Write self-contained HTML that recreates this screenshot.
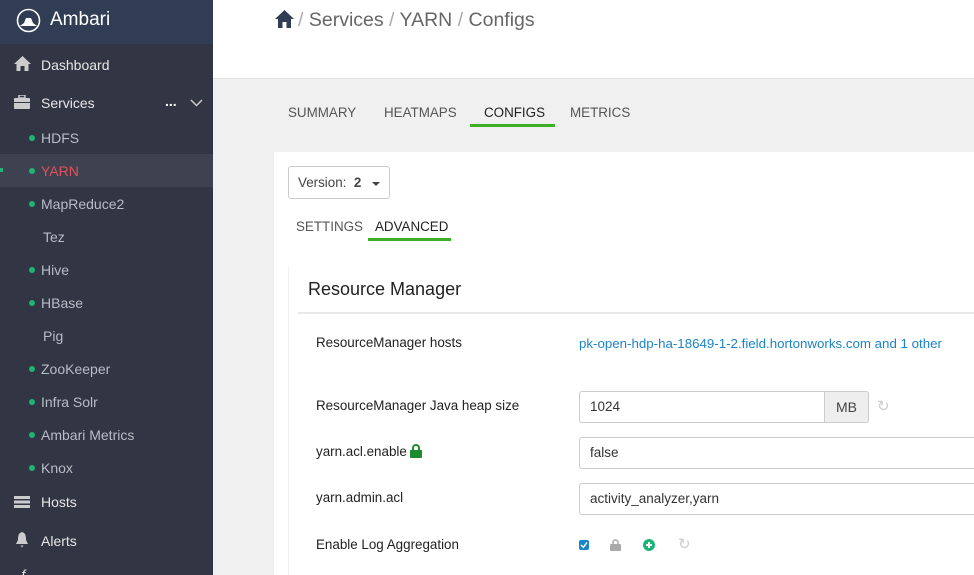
<!DOCTYPE html>
<html style="overflow:hidden"><head><meta charset="utf-8"><style>
*{box-sizing:border-box;margin:0;padding:0}
html,body{width:974px;height:575px;overflow:hidden}
body{font-family:"Liberation Sans",sans-serif;background:#f0f0f0;position:relative}
.a{position:absolute;white-space:nowrap}
#sb{position:absolute;left:0;top:0;width:213px;height:575px;background:#323544}
#sbh{position:absolute;left:0;top:0;width:213px;height:44px;background:#313d54}
.nav{color:#e6e6e6;font-size:14px}
.sub{color:#b8bcc6;font-size:14px}
.dot{position:absolute;width:6px;height:6px;border-radius:3px;background:#1eb475}
.inp{position:absolute;background:#fff;border:1px solid #ccc;border-radius:3px;font-size:13.5px;color:#333;padding-left:10px}
.t{font-size:13.4px}
</style></head><body>
<div id="sb"></div>
<div id="sbh"></div>
<svg class="a" style="left:16px;top:8px" width="25" height="25" viewBox="0 0 25 25"><circle cx="12.5" cy="12.5" r="11" fill="none" stroke="#fff" stroke-width="1.6"/><path d="M12.5 4 L12.5 8 M10 10 L15 10 L17 15 L21 18 L4 18 L8 15 Z" fill="#fff"/></svg>
<div class="a" style="left:50px;top:9px;color:#fff;font-size:19px">Ambari</div>
<svg class="a" style="left:14px;top:56px" width="17" height="15" viewBox="0 0 17 15"><path d="M8.5 0 L17 8 L14.5 8 L14.5 15 L10.5 15 L10.5 10 L6.5 10 L6.5 15 L2.5 15 L2.5 8 L0 8 Z" fill="#ccc"/></svg>
<div class="a nav" style="left:41px;top:57px">Dashboard</div>
<svg class="a" style="left:14px;top:95px" width="16" height="14" viewBox="0 0 16 14"><rect x="5" y="0" width="6" height="3" fill="none" stroke="#ccc" stroke-width="1.5"/><rect x="0" y="3" width="16" height="11" rx="1" fill="#ccc"/><rect x="0" y="7" width="16" height="1" fill="#323544"/></svg>
<div class="a nav" style="left:41px;top:95px">Services</div>
<div class="a" style="left:165px;top:93px;color:#fff;font-size:14px;font-weight:bold">...</div>
<svg class="a" style="left:190px;top:99px" width="13" height="8" viewBox="0 0 13 8"><path d="M1 1 L6.5 6.5 L12 1" fill="none" stroke="#ccc" stroke-width="1.5"/></svg>
<div class="a" style="left:0;top:154px;width:213px;height:33px;background:#3e414f"></div>
<div class="a" style="left:0;top:168px;width:3px;height:4px;background:#1eb475"></div>
<div class="dot" style="left:29px;top:135px"></div><div class="a sub" style="left:41px;top:130px">HDFS</div>
<div class="dot" style="left:29px;top:168px"></div><div class="a" style="left:41px;top:163px;color:#e0535d;font-size:14px">YARN</div>
<div class="dot" style="left:29px;top:201px"></div><div class="a sub" style="left:41px;top:196px">MapReduce2</div>
<div class="a sub" style="left:43px;top:229px">Tez</div>
<div class="dot" style="left:29px;top:267px"></div><div class="a sub" style="left:41px;top:262px">Hive</div>
<div class="dot" style="left:29px;top:300px"></div><div class="a sub" style="left:41px;top:295px">HBase</div>
<div class="a sub" style="left:43px;top:328px">Pig</div>
<div class="dot" style="left:29px;top:366px"></div><div class="a sub" style="left:41px;top:361px">ZooKeeper</div>
<div class="dot" style="left:29px;top:399px"></div><div class="a sub" style="left:41px;top:394px">Infra Solr</div>
<div class="dot" style="left:29px;top:432px"></div><div class="a sub" style="left:41px;top:427px">Ambari Metrics</div>
<div class="dot" style="left:29px;top:465px"></div><div class="a sub" style="left:41px;top:460px">Knox</div>
<svg class="a" style="left:14px;top:496px" width="16" height="12" viewBox="0 0 16 12"><rect y="0" width="16" height="3" fill="#ccc"/><rect y="4.5" width="16" height="3" fill="#ccc"/><rect y="9" width="16" height="3" fill="#ccc"/></svg>
<div class="a nav" style="left:41px;top:494px">Hosts</div>
<svg class="a" style="left:15px;top:532px" width="14" height="16" viewBox="0 0 14 16"><path d="M7 0 C3 1 3 5 3 8 L1 12 L13 12 L11 8 C11 5 11 1 7 0 Z M5.5 13.5 L8.5 13.5 L7 15.5 Z" fill="#ccc"/></svg>
<div class="a nav" style="left:41px;top:533px">Alerts</div>
<div class="a nav" style="left:20px;top:566px">&#402;</div>

<div class="a" style="left:213px;top:0;width:761px;height:79px;background:#fff;border-bottom:1px solid #e4e4e4"></div>
<svg class="a" style="left:275px;top:10px" width="19" height="18" viewBox="0 0 19 18"><path d="M9.5 0 L19 9 L16 9 L16 18 L11.5 18 L11.5 12 L7.5 12 L7.5 18 L3 18 L3 9 L0 9 Z" fill="#313d54"/></svg>
<div class="a" style="left:298px;top:9px;font-size:19.5px;color:#666"><span style="color:#aaa">/ </span>Services <span style="color:#aaa">/</span> YARN <span style="color:#aaa">/</span> Configs</div>

<div class="a t" style="left:288px;top:105px;color:#555">SUMMARY</div>
<div class="a t" style="left:384px;top:105px;color:#555">HEATMAPS</div>
<div class="a t" style="left:484px;top:105px;color:#222">CONFIGS</div>
<div class="a" style="left:470px;top:124px;width:85px;height:3px;background:#3fae2a"></div>
<div class="a t" style="left:570px;top:105px;color:#555">METRICS</div>

<div class="a" style="left:274px;top:152px;width:700px;height:423px;background:#fff"></div>
<div class="a" style="left:288px;top:166px;width:102px;height:33px;border:1px solid #ccc;border-radius:3px;background:#fff"></div>
<div class="a t" style="left:298px;top:175px;color:#444">Version: &nbsp;<b>2</b></div>
<svg class="a" style="left:372px;top:182px" width="8" height="5"><path d="M0 0 L8 0 L4 4 Z" fill="#444"/></svg>
<div class="a t" style="left:296px;top:219px;color:#555">SETTINGS</div>
<div class="a t" style="left:375px;top:219px;color:#222">ADVANCED</div>
<div class="a" style="left:368px;top:238px;width:83px;height:3px;background:#3fae2a"></div>

<div class="a" style="left:288px;top:266px;width:1px;height:309px;background:#f0f0f0"></div>
<div class="a" style="left:308px;top:279px;font-size:18px;color:#222">Resource Manager</div>
<div class="a" style="left:298px;top:312px;width:676px;height:2px;background:#e8e8e8"></div>

<div class="a t" style="left:316px;top:335px;color:#222">ResourceManager hosts</div>
<div class="a" style="left:579px;top:336px;font-size:13.3px;color:#1a84c9">pk-open-hdp-ha-18649-1-2.field.hortonworks.com and 1 other</div>
<div class="a t" style="left:316px;top:398px;color:#222">ResourceManager Java heap size</div>
<div class="inp" style="left:579px;top:391px;width:290px;height:32px;line-height:30px">1024</div>
<div class="a" style="left:824px;top:391px;width:45px;height:32px;background:#eee;border:1px solid #ccc;border-radius:0 3px 3px 0;font-size:14px;color:#444;text-align:center;line-height:30px">MB</div>
<div class="a" style="left:877px;top:397px;font-size:15px;color:#ccc">&#8635;</div>
<div class="a t" style="left:316px;top:444px;color:#222">yarn.acl.enable</div>
<svg class="a" style="left:410px;top:444px" width="12" height="14" viewBox="0 0 12 14"><path d="M3 6 L3 4 A3 3 0 0 1 9 4 L9 6" fill="none" stroke="#1c8c2c" stroke-width="2"/><rect y="6" width="12" height="8" rx="1" fill="#1c8c2c"/></svg>
<div class="inp" style="left:579px;top:437px;width:400px;height:32px;line-height:30px">false</div>
<div class="a t" style="left:316px;top:490px;color:#222">yarn.admin.acl</div>
<div class="inp" style="left:579px;top:483px;width:400px;height:32px;line-height:30px">activity_analyzer,yarn</div>
<div class="a t" style="left:316px;top:537px;color:#222">Enable Log Aggregation</div>
<svg class="a" style="left:579px;top:540px" width="10" height="10"><rect width="10" height="10" rx="2" fill="#1a84c9"/><path d="M2 5 L4.3 7.3 L8 2.5" fill="none" stroke="#fff" stroke-width="1.5"/></svg>
<svg class="a" style="left:610px;top:539px" width="11" height="12" viewBox="0 0 11 12"><path d="M3 5 L3 3.5 A2.5 2.5 0 0 1 8 3.5 L8 5" fill="none" stroke="#aaa" stroke-width="1.6"/><rect y="5" width="11" height="7" rx="1" fill="#aaa"/></svg>
<svg class="a" style="left:643px;top:539px" width="12" height="12"><circle cx="6" cy="6" r="6" fill="#1eb475"/><path d="M6 3 L6 9 M3 6 L9 6" stroke="#fff" stroke-width="2"/></svg>
<div class="a" style="left:678px;top:535px;font-size:15px;color:#ccc">&#8635;</div>
</body></html>
